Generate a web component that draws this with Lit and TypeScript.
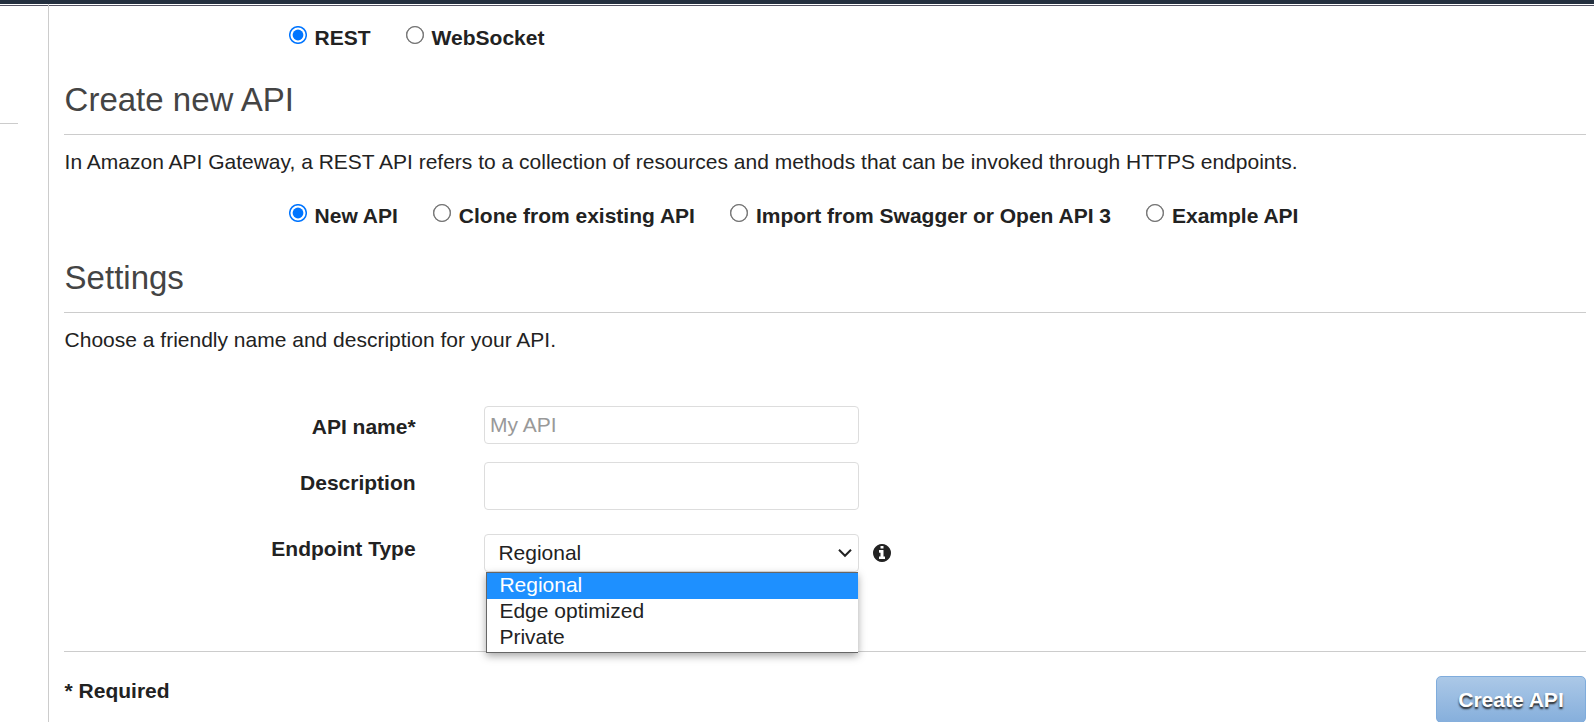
import { LitElement, html, css } from "lit";
import { customElement, state } from "lit/decorators.js";
import { classMap } from "lit/directives/class-map.js";

@customElement("radio-row")
class RadioRow extends LitElement {
  static properties = { options: { type: Array }, selected: { type: Number } };
  declare options: string[];
  declare selected: number;

  static styles = css`
    :host { display: flex; padding-left: 225px; height: 30px; gap: 35.4px; }
    .opt { display: flex; align-items: flex-start; gap: 7.6px; font-weight: 700; line-height: 30px; white-space: nowrap; }
    .dot { width: 18px; height: 18px; flex: none; margin-top: 3px; }
    .ring { fill: #fff; stroke: #767676; stroke-width: 1.3; }
    .on .ring { stroke: #0075ff; stroke-width: 1.5; }
    .fill { fill: #0075ff; }
  `;

  render() {
    return this.options.map(
      (o, i) => html`<label class=${classMap({ opt: true, on: i === this.selected })} @click=${() => (this.selected = i)}>
        <svg class="dot" viewBox="0 0 18 18">
          <circle class="ring" cx="9" cy="9" r="8.3"></circle>
          <circle class=${i === this.selected ? "fill" : "ring"} cx="9" cy="9" r=${i === this.selected ? 5.4 : 8.3}></circle>
        </svg><span>${o}</span>
      </label>`
    );
  }
}

@customElement("app-root")
class AppRoot extends LitElement {
  @state() private active = 0;
  private types = ["Regional", "Edge optimized", "Private"];

  static styles = css`
    :host { display: flex; flex-direction: column; box-sizing: border-box; height: 722px; overflow: hidden; background: #fff; color: #222; font: 21px/30px "Liberation Sans", Arial, sans-serif; }
    .bar { height: 4px; flex: none; background: #232f3e; }
    .rule { height: 1px; flex: none; margin-top: 1px; background: #545363; }
    .body { display: flex; flex: 1; min-height: 0; }
    .side { width: 48px; flex: none; }
    .side hr { width: 18px; margin: 117px 0 0; border: 0; border-top: 1px solid #ccc; }
    .main { flex: 1; border-left: 1px solid #ccc; margin-top: -2px; padding: 19px 8px 0 15px; min-width: 0; }
    h1 { font-size: 33px; line-height: 40px; font-weight: 400; color: #444; margin: 27px 0 0; padding-left: 0.6px; height: 54px; border-bottom: 1px solid #ccc; }
    p { margin: 12px 0 0; padding-left: 0.6px; white-space: nowrap; }
    .choices { margin-top: 24px; }
    .form { display: grid; grid-template-columns: 351px 375px 1fr; column-gap: 69px; margin-top: 51px; border-bottom: 1px solid #ccc; height: 245px; grid-template-rows: 56px 72px 1fr; }
    .lbl { text-align: right; font-weight: 700; padding-top: 6px; margin-right: -0.6px; }
    .lbl.ep { padding-top: 0; }
    .control { width: 375px; box-sizing: border-box; border: 1px solid #ddd; border-radius: 4px; background: #fff; height: 38px; padding: 0 5px; line-height: 36px; font: inherit; color: #222; outline: none; display: block; }
    .control::placeholder { color: #999; opacity: 1; }
    .area { height: 48px; resize: none; }
    .cell { grid-column: 2 / 4; position: relative; display: flex; gap: 14px; align-items: flex-start; }
    .select { display: flex; justify-content: space-between; align-items: center; padding: 0 6px 0 13.4px; }
    .chev { width: 14px; height: 10px; }
    .info { width: 18px; height: 18px; margin-top: 10px; }
    .menu { position: absolute; left: 2px; top: 38px; width: 372px; height: 81px; box-sizing: border-box; border: 1px solid #666; border-right: 0; background: #fff; box-shadow: 0 3px 8px rgba(0,0,0,.35); z-index: 2; }
    .item { height: 26px; line-height: 24px; padding-left: 12.4px; }
    .item.on { background: #1e90ff; color: #fff; }
    .foot { display: flex; justify-content: space-between; margin-top: 24px; }
    .req { font-weight: 700; padding-left: 0.6px; }
    .btn { width: 150px; height: 47px; box-sizing: border-box; border: 1px solid #7facdc; border-radius: 5px; background: linear-gradient(#abc8e7, #86afdc); color: #fff; font: 700 21px/45px "Liberation Sans", Arial, sans-serif; text-shadow: 0 2px 2px #222; padding: 0; white-space: nowrap; }
  `;

  render() {
    return html`
      <div class="bar"></div><div class="rule"></div>
      <div class="body">
        <div class="side"><hr /></div>
        <div class="main">
          <radio-row .options=${["REST", "WebSocket"]} .selected=${0}></radio-row>
          <h1>Create new API</h1>
          <p>In Amazon API Gateway, a REST API refers to a collection of resources and methods that can be invoked through HTTPS endpoints.</p>
          <radio-row class="choices" .options=${["New API", "Clone from existing API", "Import from Swagger or Open API 3", "Example API"]} .selected=${0}></radio-row>
          <h1>Settings</h1>
          <p>Choose a friendly name and description for your API.</p>
          <div class="form">
            <div class="lbl">API name*</div>
            <div class="cell"><input class="control" placeholder="My API" /></div>
            <div class="lbl">Description</div>
            <div class="cell"><textarea class="control area"></textarea></div>
            <div class="lbl ep">Endpoint Type</div>
            <div class="cell">
              <div class="control select">
                <span>${this.types[this.active]}</span>
                <svg class="chev" viewBox="0 0 14 10"><path d="M1 1.8 7 7.8 13 1.8" fill="none" stroke="#222" stroke-width="2"></path></svg>
              </div>
              <svg class="info" viewBox="0 128 1536 1536"><path fill="#222" d="M1024 1376v-160q0-14-9-23t-23-9h-96v-512q0-14-9-23t-23-9h-320q-14 0-23 9t-9 23v160q0 14 9 23t23 9h96v320h-96q-14 0-23 9t-9 23v160q0 14 9 23t23 9h448q14 0 23-9t9-23zm-128-896v-160q0-14-9-23t-23-9h-192q-14 0-23 9t-9 23v160q0 14 9 23t23 9h192q14 0 23-9t9-23zm640 416q0 209-103 385.5t-279.5 279.5-385.5 103-385.5-103-279.5-279.5-103-385.5 103-385.5 279.5-279.5 385.5-103 385.5 103 279.5 279.5 103 385.5z"></path></svg>
              <div class="menu">
                ${this.types.map((t, i) => html`<div class=${classMap({ item: true, on: i === this.active })} @click=${() => (this.active = i)}>${t}</div>`)}
              </div>
            </div>
          </div>
          <div class="foot"><div class="req">* Required</div><button class="btn">Create API</button></div>
        </div>
      </div>
    `;
  }
}
